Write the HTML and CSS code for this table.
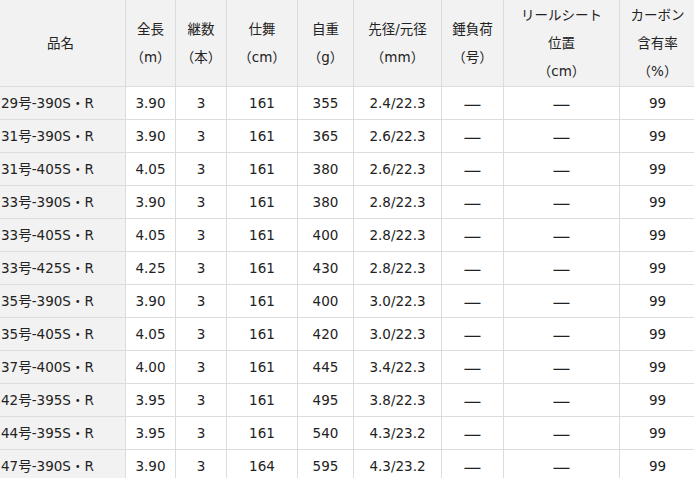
FILE: index.html
```html
<!DOCTYPE html>
<html lang="ja">
<head>
<meta charset="utf-8">
<link rel="stylesheet" href="styles.css">
</head>
<body>
<table class="spec">
  <colgroup>
    <col class="c-name">
    <col class="c-len">
    <col class="c-joint">
    <col class="c-close">
    <col class="c-weight">
    <col class="c-dia">
    <col class="c-sinker">
    <col class="c-reel">
    <col class="c-carbon">
  </colgroup>
  <thead>
    <tr>
      <th>品名</th>
      <th>全長<br>（m）</th>
      <th>継数<br>（本）</th>
      <th>仕舞<br>（cm）</th>
      <th>自重<br>（g）</th>
      <th>先径/元径<br>（mm）</th>
      <th>錘負荷<br>（号）</th>
      <th>リールシート<br>位置<br>（cm）</th>
      <th>カーボン<br>含有率<br>（%）</th>
    </tr>
  </thead>
  <tbody>
    <tr><td class="name">29号-390S・R</td><td>3.90</td><td>3</td><td>161</td><td>355</td><td>2.4/22.3</td><td class="dash">—</td><td class="dash">—</td><td>99</td></tr>
    <tr><td class="name">31号-390S・R</td><td>3.90</td><td>3</td><td>161</td><td>365</td><td>2.6/22.3</td><td class="dash">—</td><td class="dash">—</td><td>99</td></tr>
    <tr><td class="name">31号-405S・R</td><td>4.05</td><td>3</td><td>161</td><td>380</td><td>2.6/22.3</td><td class="dash">—</td><td class="dash">—</td><td>99</td></tr>
    <tr><td class="name">33号-390S・R</td><td>3.90</td><td>3</td><td>161</td><td>380</td><td>2.8/22.3</td><td class="dash">—</td><td class="dash">—</td><td>99</td></tr>
    <tr><td class="name">33号-405S・R</td><td>4.05</td><td>3</td><td>161</td><td>400</td><td>2.8/22.3</td><td class="dash">—</td><td class="dash">—</td><td>99</td></tr>
    <tr><td class="name">33号-425S・R</td><td>4.25</td><td>3</td><td>161</td><td>430</td><td>2.8/22.3</td><td class="dash">—</td><td class="dash">—</td><td>99</td></tr>
    <tr><td class="name">35号-390S・R</td><td>3.90</td><td>3</td><td>161</td><td>400</td><td>3.0/22.3</td><td class="dash">—</td><td class="dash">—</td><td>99</td></tr>
    <tr><td class="name">35号-405S・R</td><td>4.05</td><td>3</td><td>161</td><td>420</td><td>3.0/22.3</td><td class="dash">—</td><td class="dash">—</td><td>99</td></tr>
    <tr><td class="name">37号-400S・R</td><td>4.00</td><td>3</td><td>161</td><td>445</td><td>3.4/22.3</td><td class="dash">—</td><td class="dash">—</td><td>99</td></tr>
    <tr><td class="name">42号-395S・R</td><td>3.95</td><td>3</td><td>161</td><td>495</td><td>3.8/22.3</td><td class="dash">—</td><td class="dash">—</td><td>99</td></tr>
    <tr><td class="name">44号-395S・R</td><td>3.95</td><td>3</td><td>161</td><td>540</td><td>4.3/23.2</td><td class="dash">—</td><td class="dash">—</td><td>99</td></tr>
    <tr><td class="name">47号-390S・R</td><td>3.90</td><td>3</td><td>164</td><td>595</td><td>4.3/23.2</td><td class="dash">—</td><td class="dash">—</td><td>99</td></tr>
  </tbody>
</table>
</body>
</html>
```

FILE: styles.css
```css
html, body {
  margin: 0;
  padding: 0;
  overflow: hidden;
  background: #ffffff;
}

.spec {
  border-collapse: collapse;
  table-layout: fixed;
  width: 700px;
  margin-left: -5px;
  font-family: "DejaVu Sans", "Noto Sans CJK JP", sans-serif;
  font-size: 13.5px;
  color: #222222;
}

.c-name { width: 130px; }
.c-len { width: 50px; }
.c-joint { width: 51px; }
.c-close { width: 71px; }
.c-weight { width: 56px; }
.c-dia { width: 88px; }
.c-sinker { width: 62px; }
.c-reel { width: 116px; }
.c-carbon { width: 76px; }

.spec th,
.spec td {
  border: 1px solid #dcdcdc;
  text-align: center;
  vertical-align: middle;
  line-height: 28px;
  white-space: nowrap;
  overflow: hidden;
}

.spec th {
  background: #f2f2f2;
  font-weight: normal;
  padding: 1px 0;
  border-top: 0;
}

.spec td {
  padding: 2px 0;
}

.spec td.name {
  background: #f2f2f2;
  text-align: left;
  padding-left: 5px;
}

.spec td.dash {
  font-family: "Noto Sans CJK JP", sans-serif;
  font-size: 20px;
}
```
